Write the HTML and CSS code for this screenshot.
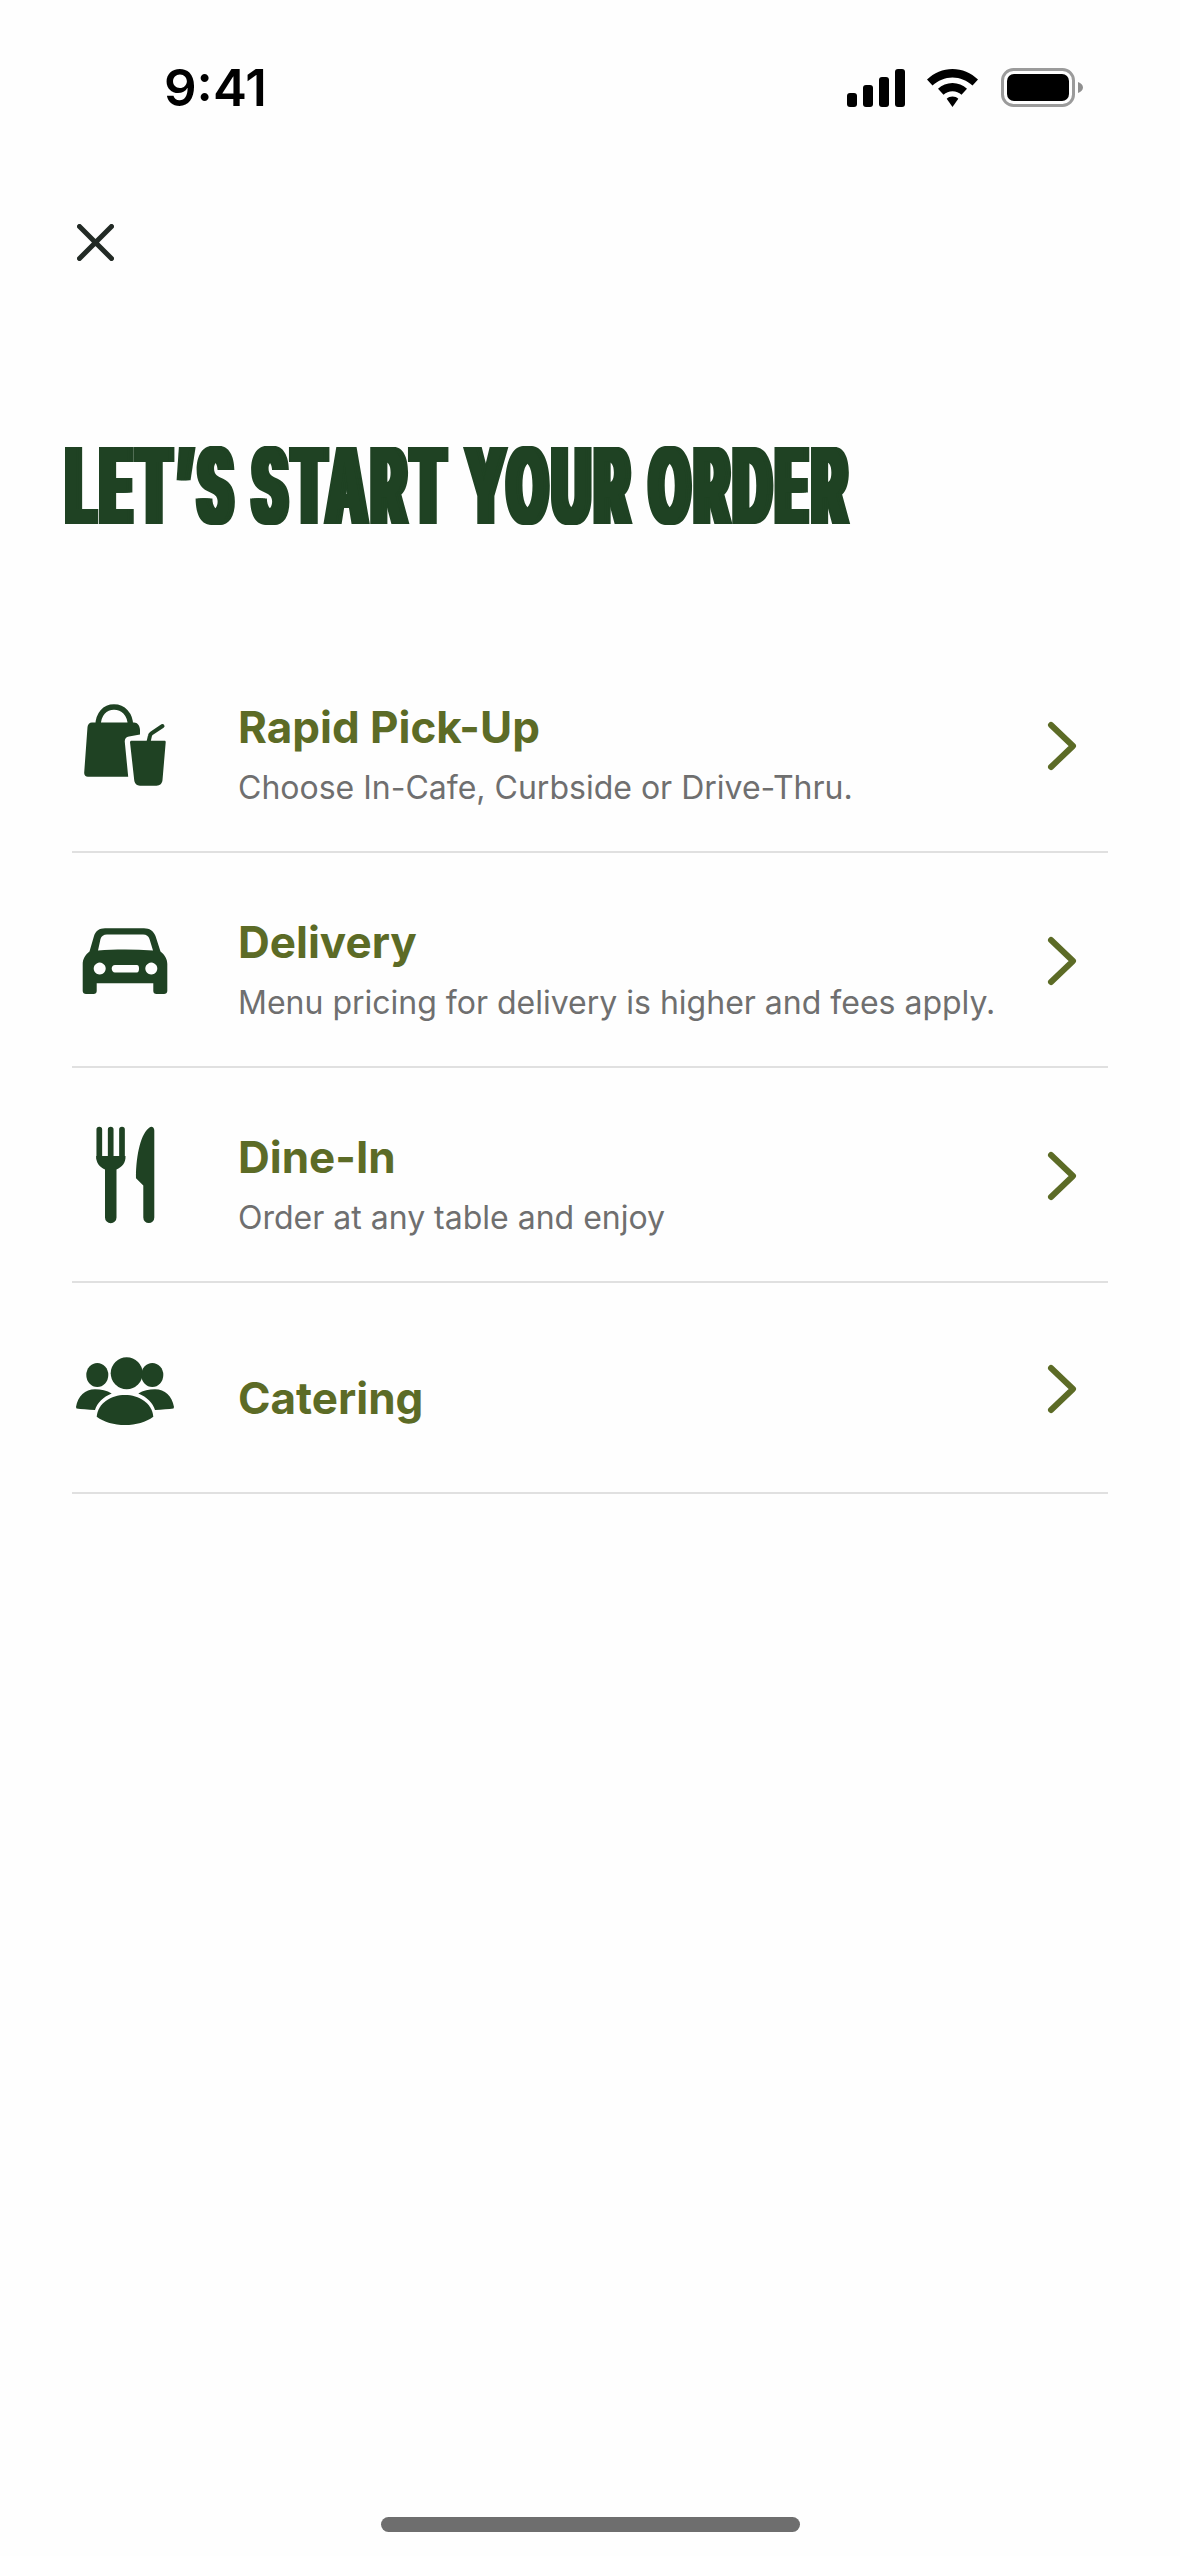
FILE: index.html
```html
<!DOCTYPE html>
<html lang="en">
<head>
<meta charset="utf-8">
<title>Start your order</title>
<link rel="stylesheet" href="styles.css">
</head>
<body>
<main class="screen">
  <header class="status">
    <span class="time">9:41</span>
    <div class="status-icons">
      <svg class="signal" viewBox="0 0 58 38" width="58" height="38"><rect x="0" y="24" width="10" height="14" rx="3"/><rect x="16" y="16" width="10" height="22" rx="3"/><rect x="32" y="8" width="10" height="30" rx="3"/><rect x="48" y="0" width="10" height="38" rx="3"/></svg>
      <svg class="wifi" viewBox="0 0 51 38" width="51" height="38"><path d="M25.5 0C35 0 44 4 51 10.500L45.500 16.500C40 11.500 33 8.500 25.500 8.500S11 11.500 5.500 16.500L0 10.500C7 4 16 0 25.500 0Z"/><path d="M25.500 14C31 14 36 16.200 40 19.800L34.500 25.800C32 23.500 29 22.300 25.500 22.300S19 23.500 16.500 25.800L11 19.800C15 16.200 20 14 25.500 14Z"/><path d="M25.500 27.500C27.800 27.500 29.700 28.300 31.300 29.800L25.500 38L19.700 29.800C21.300 28.300 23.200 27.500 25.500 27.500Z"/></svg>
      <svg class="battery" viewBox="0 0 82 40" width="82" height="40"><rect x="1.500" y="1.500" width="71" height="36" rx="11" fill="none" stroke="#9b9b9b" stroke-width="3"/><rect x="6" y="6" width="62" height="27" rx="7" fill="#000"/><path d="M77 14C80 15 82 17 82 19.500S80 24 77 25Z" fill="#8f8f8f"/></svg>
    </div>
  </header>

  <button class="close" aria-label="Close">
    <svg viewBox="0 0 37 37" width="37" height="37"><path d="M2.500 2.500L34.500 34.500M34.500 2.500L2.500 34.500"/></svg>
  </button>

  <h1 class="title">LET’S START YOUR ORDER</h1>

  <ul class="options">
    <li class="option">
      <svg class="option-icon" viewBox="0 0 110 110" width="110" height="110">
        <path d="M26 36C26 24 33 17 42 17S58.500 24 58.500 36" fill="none" stroke="#1f4223" stroke-width="5.500"/>
        <path d="M20 32.500H62C65.500 32.500 68 36 68 40V44.500L57 46.500C54 47 52.500 49 52.800 52L56.200 86.800H16C13.500 86.800 12 85 12.200 82.500L15.500 37C15.800 34.500 17.500 32.500 20 32.500Z"/>
        <path d="M59.500 50.700H92.500C93.300 50.700 93.800 51.300 93.700 52.200L90.500 90C90.200 93.500 88 95.700 84.500 95.700H68C64.800 95.700 62.500 93.500 62.200 90L58 52.200C58 51.300 58.600 50.700 59.500 50.700Z"/>
        <path d="M76.500 52L78 45.500C78.200 44.500 78.800 43.800 79.500 43.300L90.500 36" fill="none" stroke="#1f4223" stroke-width="4" stroke-linecap="round"/>
      </svg>
      <div class="option-text">
        <h2 class="option-name">Rapid Pick-Up</h2>
        <p class="option-note">Choose In-Cafe, Curbside or Drive-Thru.</p>
      </div>
      <svg class="chevron" viewBox="0 0 32 52" width="32" height="52"><path d="M5 5L27 26L5 47"/></svg>
    </li>
    <li class="option">
      <svg class="option-icon" viewBox="0 0 110 110" width="110" height="110">
        <path fill-rule="evenodd" d="M33 23.300H72C77.500 23.300 81.500 26 83.500 31L88.500 46.500C92.500 49.500 95.300 54 95.300 59V86C95.300 88 93.800 89 92 89H84.500C82.500 89 81.300 87.800 81.300 86V78.300H24.700V86C24.700 87.800 23.500 89 21.500 89H14C12.200 89 10.700 88 10.700 86V59C10.700 54 13.500 49.500 17.500 46.500L22 31C23.500 26 27.500 23.300 33 23.300ZM35 29.500C31.500 29.500 29.500 31 28.500 34L26 45.500C43 44.300 62 44.300 81 45.500L77.500 34C76.500 31 74.500 29.500 71 29.500ZM27.700 57.600A6 6 0 1 0 27.701 57.600ZM79.300 57.600A6 6 0 1 0 79.301 57.600ZM43 60C41 60 39.700 61.500 39.700 63.600S41 67.600 43 67.600H64.700C66.700 67.600 67 65.600 67 63.600S66.700 60 64.700 60Z"/>
      </svg>
      <div class="option-text">
        <h2 class="option-name">Delivery</h2>
        <p class="option-note">Menu pricing for delivery is higher and fees apply.</p>
      </div>
      <svg class="chevron" viewBox="0 0 32 52" width="32" height="52"><path d="M5 5L27 26L5 47"/></svg>
    </li>
    <li class="option">
      <svg class="option-icon" viewBox="0 0 110 110" width="110" height="110">
        <path d="M27.300 9.500V38M38.700 9.500V38M50 9.500V38" fill="none" stroke="#1f4223" stroke-width="5.700" stroke-linecap="round"/>
        <path d="M24.200 36H53.500C53.800 43 50 47 44.500 49.500V97.500A5.700 5.700 0 0 1 33 97.500V49.500C27.500 47 24 43 24.200 36Z"/>
        <path d="M82.300 10.500C82.300 7.500 79.800 5.800 77.500 7.500C69.500 13 64 33 64 58.300L71.300 65.500V97.500A5.500 5.500 0 0 0 82.300 97.500Z"/>
      </svg>
      <div class="option-text">
        <h2 class="option-name">Dine-In</h2>
        <p class="option-note">Order at any table and enjoy</p>
      </div>
      <svg class="chevron" viewBox="0 0 32 52" width="32" height="52"><path d="M5 5L27 26L5 47"/></svg>
    </li>
    <li class="option option-short">
      <svg class="option-icon" viewBox="0 0 110 110" width="110" height="110">
        <circle cx="54.700" cy="40.300" r="16"/>
        <ellipse cx="25.300" cy="42" rx="11" ry="12"/>
        <ellipse cx="80.300" cy="42" rx="11" ry="12"/>
        <path d="M24.700 83.700C26 70 39 62 53 62S80 70 81.300 83.700C74 89 64 92 53 92S32 89 24.700 83.700Z"/>
        <path d="M4 74C6 63 13 56.300 23 56.300C29 56.300 35 57.500 39.700 60.500C31 64 25 70 23 77C16 76.500 9 76 4.500 75.500Z"/>
        <path d="M102 74C100 63 93 56.300 83 56.300C77 56.300 71 57.500 66.300 60.500C75 64 81 70 83 77C90 76.500 97 76 101.500 75.500Z"/>
      </svg>
      <div class="option-text">
        <h2 class="option-name">Catering</h2>
      </div>
      <svg class="chevron" viewBox="0 0 32 52" width="32" height="52"><path d="M5 5L27 26L5 47"/></svg>
    </li>
  </ul>

  <div class="home-bar"></div>
</main>
</body>
</html>
```
FILE: styles.css
```css
* { box-sizing: border-box; }
html, body { margin: 0; padding: 0; background: #fefefe; }
body { overflow: hidden; }

.screen {
  width: 1180px;
  height: 2556px;
  display: flex;
  flex-direction: column;
  overflow: hidden;
  font-family: "Liberation Sans", Arial, sans-serif;
}

.status {
  display: flex;
  justify-content: space-between;
  align-items: center;
  height: 40px;
  margin-top: 68px;
  padding: 0 97px 0 164px;
}
.time {
  font-family: Inter, sans-serif;
  font-weight: 600;
  font-size: 51px;
  line-height: 40px;
  color: #000;
}
.status-icons { display: flex; align-items: center; gap: 22px; }
.signal, .wifi { fill: #000; }
.wifi { margin-right: 1px; }

.close {
  align-self: flex-start;
  display: flex;
  margin: 116px 0 0 77px;
  padding: 0;
  border: 0;
  background: none;
}
.close path { fill: none; stroke: #222a25; stroke-width: 5; stroke-linecap: round; }

.title {
  margin: 175px 0 0 64px;
  width: max-content;
  font-family: Inter, sans-serif;
  font-weight: 800;
  font-size: 106px;
  line-height: 100px;
  white-space: nowrap;
  color: #1f4223;
  letter-spacing: 8px;
  transform: scaleX(0.5);
  transform-origin: left center;
  text-shadow: 4px 0 #1f4223, 8px 0 #1f4223, 12px 0 #1f4223, -4px 0 #1f4223;
}

.options {
  list-style: none;
  margin: 102px 72px 0;
  padding: 0;
}
.option {
  display: flex;
  align-items: center;
  height: 215px;
  border-bottom: 2px solid #e0e0e0;
}
.option-short { height: 211px; }
.option-icon { flex: none; fill: #1f4223; margin-right: 56px; }
.option-text { flex: 1; padding-top: 20px; font-family: Inter, sans-serif; }
.option-name {
  margin: 0;
  font-weight: 700;
  font-size: 44px;
  line-height: 50px;
  color: #5c6b26;
}
.option-note {
  margin: 16px 0 0;
  font-size: 32px;
  line-height: 40px;
  color: #6f6f6f;
}
.chevron { flex: none; margin: 2px 30px 0 0; }
.chevron path { fill: none; stroke: #5c6b26; stroke-width: 6; stroke-linecap: round; stroke-linejoin: round; }

.home-bar {
  width: 419px;
  height: 15px;
  margin: auto 0 24px 381px;
  border-radius: 8px;
  background: #6e6e6e;
}
```
